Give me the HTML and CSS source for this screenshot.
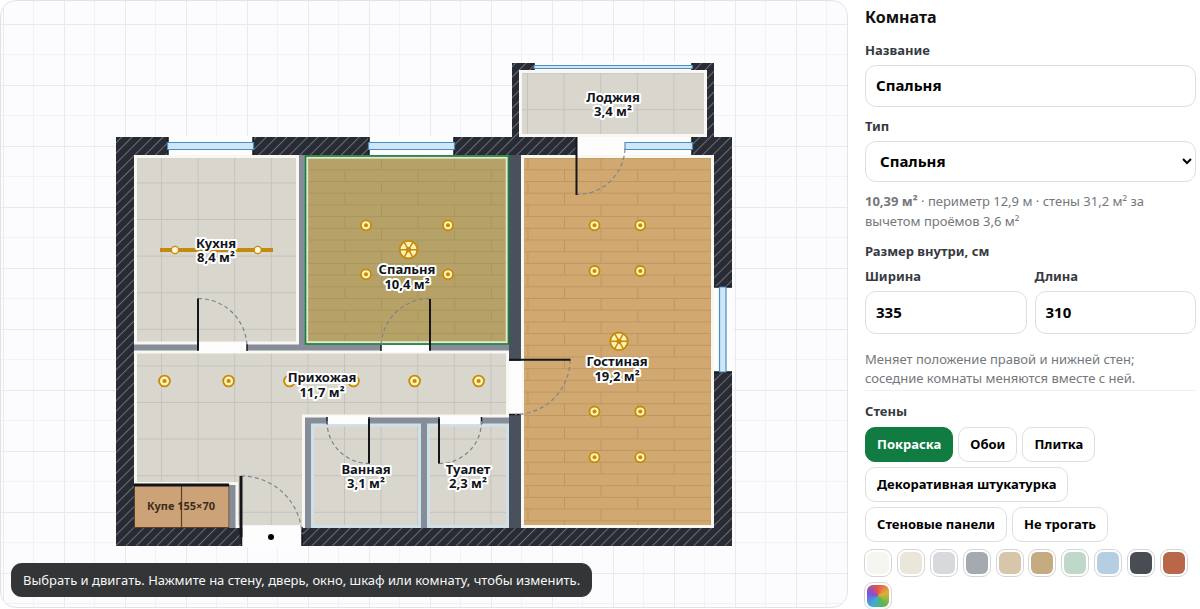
FILE: index.html
```html
<!DOCTYPE html>
<html lang="ru">
<head>
<meta charset="utf-8">
<meta name="viewport" content="width=device-width, initial-scale=1">
<title>План квартиры</title>
<link rel="stylesheet" href="styles.css">
</head>
<body>
<div class="app">
  <main class="canvas">
    <svg class="plan" viewBox="0 0 846 606" role="img" aria-label="План квартиры">
      <defs>
        <pattern id="grid" x="2" y="23" width="61" height="61" patternUnits="userSpaceOnUse">
          <path class="grid-minor" d="M30.5 0V61M0 30.5H61"/>
          <path class="grid-major" d="M.5 0V61M0 .5H61"/>
        </pattern>
        <pattern id="hatch" width="7.3" height="7.3" patternUnits="userSpaceOnUse" patternTransform="rotate(45)">
          <rect class="hatch-base" width="7.3" height="7.3"/>
          <path class="hatch-line" d="M.5 0V7.3"/>
        </pattern>
        <pattern id="tile" x="161" y="182.4" width="36.6" height="36.6" patternUnits="userSpaceOnUse">
          <rect class="tile-base" width="36.6" height="36.6"/>
          <path class="tile-line" d="M.5 0V36.6M0 .5H36.6"/>
        </pattern>
        <pattern id="wood" x="381" y="181" width="73.2" height="23.4" patternUnits="userSpaceOnUse">
          <rect class="wood-base" width="73.2" height="23.4"/>
          <path class="wood-line" d="M0 .5H73.2M0 12.2H73.2M.5 0V11.7M37.1 11.7V23.4"/>
        </pattern>
        <g id="spot"><circle class="lamp" r="5"/><circle class="lamp-dot" r="2"/></g>
        <g id="spot-lg"><circle class="lamp" r="5.4"/><circle class="lamp-dot" r="2.1"/></g>
        <g id="chandelier"><circle class="lamp" r="8.8"/><path class="lamp-ray" d="M-8.8 0H8.8M-4.4 -7.6L4.4 7.6M4.4 -7.6L-4.4 7.6"/><circle class="lamp-dot" r="2.6"/></g>
      </defs>

      <rect x="-200" y="-200" width="1246" height="1006" fill="url(#grid)"/>

      <g transform="translate(-1 -1)">
        <!-- Несущие стены -->
        <path fill="url(#hatch)" d="M512 63H714V137H732V546H116V137H512Z"/>
        <!-- Перегородки -->
        <path class="wall-thin" d="M134 155H509V528H134Z"/>
        <path class="wall-mid" d="M509 155H522V528H509Z"/>

        <!-- Помещения -->
        <g class="room">
          <path fill="url(#tile)" d="M520.5 71.5H705.500V135.500H520.5Z"/>
          <path fill="url(#tile)" d="M135.500 156.500H297.500V343H135.500Z"/>
          <path fill="url(#wood)" d="M522.5 156.500H712.5V526.500H522.5Z"/>
          <path fill="url(#tile)" d="M135.500 352H507.500V416H303.500V526.500H236.500V483.500H135.500Z"/>
        </g>
        <g class="room room-wet">
          <path fill="url(#tile)" d="M312.500 425H419.500V526.500H312.500Z"/>
          <path fill="url(#tile)" d="M428.500 425H507.500V526.500H428.500Z"/>
        </g>
        <rect fill="url(#wood)" x="305" y="155.500" width="204" height="189"/>
        <rect class="selected-tint" x="305" y="155.500" width="204" height="189"/>
        <rect class="selected-inner" x="307.200" y="157.700" width="199.500" height="184.500"/>
        <rect class="selected-outer" x="305.500" y="156" width="203" height="188"/>

        <!-- Проёмы -->
        <g class="opening">
          <path d="M168 136H253V155H168ZM369 136H454V155H369ZM577 137H692V155H577ZM714 287H733V372H714Z"/>
          <path d="M534 62H692V70H534Z"/>
          <path d="M198 342.500H247V353H198ZM381 345H430V352H381ZM509 360H522V414H509ZM242 526H302V547H242ZM327 416H369V424H327ZM439 416H481.500V424H439Z"/>
        </g>
        <path class="jamb" d="M168 137V155M253 137V155M369 137V155M454 137V155M692 137V155M534 63V70M692 63V70M714 287H732M714 372H732M198 344V351M247 344V351M381 345V351M430 345V351M509 360H521M509 414.500H521M241.500 528V546M302 527V546M327 417V424M369 417V424M439 417V424M481.500 417V424"/>
        <path class="glass" d="M167.500 142.500H253.500V149.500H167.500ZM368.500 142.500H454.500V149.500H368.500ZM625 142.500H692.500V149.500H625ZM719.500 287H726V372H719.500ZM534 65.500H692.500V68.500H534Z"/>

        <!-- Двери -->
        <path class="swing" d="M198 298.500A49 49 0 0 1 247 347M430 298.500A49 49 0 0 0 381 347M625 149A48 48 0 0 1 577 194.500M570 360A55 55 0 0 1 515 414.500M241 476A61 61 0 0 1 302 534M327 421A42 42 0 0 0 369 463.500M481.500 421A42 42 0 0 1 439 463.500"/>
        <path class="leaf" d="M198 298.500V350M430 299V350M576.500 137V195M509 359.700H570.500M369 419V463.500M439 419V463.500"/>
        <path class="leaf leaf-main" d="M241 476V537"/>
        <circle cx="271" cy="537" r="3"/>

        <!-- Шкаф -->
        <rect class="closet" x="134.500" y="485" width="94.500" height="42.500"/>
        <path class="closet-split" d="M181.500 485V528"/>
        <path class="closet-front" d="M134 485H229"/>
        <path class="wall-thin" d="M229.500 485H235.500V528H229.500Z"/>

        <!-- Светильники -->
        <path class="track" d="M160 250H273"/>
        <circle class="track-lamp" cx="175" cy="250" r="3.600"/>
        <circle class="track-lamp" cx="257.700" cy="250" r="3.600"/>
        <use href="#spot" x="366" y="225.300"/><use href="#spot" x="448" y="225.300"/>
        <use href="#spot" x="366" y="274.300"/><use href="#spot" x="448" y="274.300"/>
        <use href="#chandelier" x="408.500" y="249.700"/>
        <use href="#spot" x="594.500" y="225.300"/><use href="#spot" x="640.300" y="225.300"/>
        <use href="#spot" x="594.500" y="271"/><use href="#spot" x="640.300" y="271"/>
        <use href="#spot" x="594.500" y="411.500"/><use href="#spot" x="640.300" y="411.500"/>
        <use href="#spot" x="594.500" y="457.300"/><use href="#spot" x="640.300" y="457.300"/>
        <use href="#chandelier" x="619" y="341.300"/>
        <use href="#spot-lg" x="164.500" y="381"/><use href="#spot-lg" x="228.600" y="381"/>
        <use href="#spot-lg" x="289.500" y="381"/><use href="#spot-lg" x="353.500" y="381"/>
        <use href="#spot-lg" x="414.600" y="381"/><use href="#spot-lg" x="478.600" y="381"/>

        <!-- Подписи -->
        <g class="label">
          <text x="216" y="248">Кухня</text><text x="216" y="262">8,4 м²</text>
          <text x="407" y="274">Спальня</text><text x="407" y="289">10,4 м²</text>
          <text x="613" y="102">Лоджия</text><text x="613" y="116">3,4 м²</text>
          <text x="617" y="366">Гостиная</text><text x="617" y="381">19,2 м²</text>
          <text x="322" y="382">Прихожая</text><text x="322" y="397">11,7 м²</text>
          <text x="366" y="474">Ванная</text><text x="366" y="488">3,1 м²</text>
          <text x="468" y="474">Туалет</text><text x="468" y="488">2,3 м²</text>
        </g>
        <text class="closet-label" x="181" y="510">Купе 155×70</text>
      </g>
    </svg>
    <div class="hint" role="status">Выбрать и двигать. Нажмите на стену, дверь, окно, шкаф или комнату, чтобы изменить.</div>
  </main>

  <aside class="panel">
    <h2 class="title">Комната</h2>
    <label class="caption" for="name">Название</label>
    <input class="field" id="name" type="text" value="Спальня">
    <label class="caption" for="type">Тип</label>
    <select class="field" id="type"><option>Спальня</option></select>
    <p class="summary"><strong>10,39 м²</strong> · периметр 12,9 м · стены 31,2 м² за вычетом проёмов 3,6 м²</p>
    <h3 class="caption">Размер внутри, см</h3>
    <div class="sizes">
      <div class="size"><label class="caption" for="w">Ширина</label><input class="field" id="w" type="text" inputmode="numeric" value="335"></div>
      <div class="size"><label class="caption" for="l">Длина</label><input class="field" id="l" type="text" inputmode="numeric" value="310"></div>
    </div>
    <p class="note">Меняет положение правой и нижней стен; соседние комнаты меняются вместе с ней.</p>
    <section class="walls">
      <h3 class="caption">Стены</h3>
      <div class="chips">
        <button class="chip chip-on" type="button">Покраска</button>
        <button class="chip" type="button">Обои</button>
        <button class="chip" type="button">Плитка</button>
        <button class="chip" type="button">Декоративная штукатурка</button>
        <button class="chip" type="button">Стеновые панели</button>
        <button class="chip" type="button">Не трогать</button>
      </div>
      <div class="swatches">
        <button class="swatch c-white" type="button" aria-label="Белый"></button>
        <button class="swatch c-cream" type="button" aria-label="Кремовый"></button>
        <button class="swatch c-light" type="button" aria-label="Светло-серый"></button>
        <button class="swatch c-gray" type="button" aria-label="Серый"></button>
        <button class="swatch c-beige" type="button" aria-label="Бежевый"></button>
        <button class="swatch c-sand" type="button" aria-label="Песочный"></button>
        <button class="swatch c-mint" type="button" aria-label="Мятный"></button>
        <button class="swatch c-blue" type="button" aria-label="Голубой"></button>
        <button class="swatch c-dark" type="button" aria-label="Графит"></button>
        <button class="swatch c-brick" type="button" aria-label="Терракота"></button>
        <button class="swatch c-any" type="button" aria-label="Свой цвет"></button>
      </div>
    </section>
  </aside>
</div>
</body>
</html>
```
FILE: styles.css
```css
* { box-sizing: border-box; }

body {
  margin: 0;
  background: #fff;
  color: #111;
  font-family: "Noto Sans", sans-serif;
  font-size: 13px;
}

.app {
  display: grid;
  grid-template-columns: minmax(0, 1fr) 331px;
  grid-template-rows: minmax(0, 1fr);
  gap: 17px;
  height: 100vh;
  padding-right: 4px;
  overflow: hidden;
}

/* Холст */
.canvas {
  position: relative;
  margin-bottom: 1px;
  border: 1px solid #e1e3e8;
  border-radius: 16px;
  background: #fcfcfe;
  overflow: hidden;
}
.plan { display: block; width: 100%; height: 100%; }

.hint {
  position: absolute;
  left: 10px;
  bottom: 10px;
  padding: 7px 12px;
  border-radius: 11px;
  background: #333537;
  color: #f6f6f6;
  font-size: 13px;
  line-height: 20px;
}

.grid-minor, .grid-major { fill: none; stroke: #f1f2f5; stroke-width: 1; }
.grid-major { stroke: #e8eaee; }
.hatch-base { fill: #282b33; }
.hatch-line { stroke: #6a6e76; stroke-width: 1; }
.tile-base { fill: #d9d6ce; }
.tile-line { fill: none; stroke: #c6c3bd; stroke-width: 1; }
.wood-base { fill: #d0a870; }
.wood-line { fill: none; stroke: #bd9763; stroke-width: 1; }
.wall-thin { fill: #868c98; }
.wall-mid { fill: #49515d; }
.room { stroke: #f8f7f2; stroke-width: 3; }
.room-wet { stroke: #cfe1e8; }
.selected-tint { fill: #7e9650; fill-opacity: .32; }
.selected-inner { fill: none; stroke: #dcebd2; stroke-width: 2; }
.selected-outer { fill: none; stroke: #16803f; stroke-width: 1.5; }
.opening { fill: #fdfdfe; }
.jamb { fill: none; stroke: #15181d; stroke-width: 1.5; }
.glass { fill: #cfe6f6; stroke: #4a8fc4; stroke-width: 1.2; }
.swing { fill: none; stroke: #7d828c; stroke-width: 1.2; stroke-dasharray: 4 3; }
.leaf { fill: none; stroke: #14161b; stroke-width: 2; }
.leaf-main { stroke-width: 3; }
.closet { fill: #cca378; stroke: #5e4124; stroke-width: 1; }
.closet-split { stroke: #5e4124; stroke-width: 1.2; }
.closet-front { stroke: #111318; stroke-width: 3; }
.lamp { fill: #fff2b5; stroke: #c58a0c; stroke-width: 1.8; }
.lamp-dot { fill: #c58a0c; }
.lamp-ray { fill: none; stroke: #c58a0c; stroke-width: 1.5; }
.track { stroke: #c58a0c; stroke-width: 4; }
.track-lamp { fill: #fffbe0; stroke: #c58a0c; stroke-width: 1.3; }
.label {
  fill: #10141b;
  stroke: #fff;
  stroke-width: 4;
  stroke-linejoin: round;
  paint-order: stroke;
  font-size: 13px;
  font-weight: 700;
  text-anchor: middle;
}
.closet-label { fill: #3e2c1c; font-size: 11px; font-weight: 700; text-anchor: middle; }

/* Панель свойств */
.panel { padding-top: 6px; min-width: 0; }
.title { margin: 0 0 12px; font-size: 16px; line-height: 22px; }
.caption {
  display: block;
  margin: 0 0 5px;
  color: #363a41;
  font-size: 13px;
  font-weight: 700;
  line-height: 20px;
}
.field {
  display: block;
  width: 100%;
  height: 42px;
  margin: 0 0 9px;
  padding: 0 10px 2px;
  border: 1px solid #dcdfe2;
  border-radius: 11px;
  background: #fff;
  color: #000;
  font: 700 15px/20px "Noto Sans", sans-serif;
}
select.field { height: 41px; }
.summary { margin: 0 0 10px; color: #74777c; line-height: 20px; }
.sizes { display: grid; grid-template-columns: 1fr 1fr; gap: 8px; }
.size .field { height: 43px; margin-bottom: 16px; }
.note { margin: 0; padding-bottom: 2px; color: #74777c; line-height: 19px; }
.walls { padding-top: 10px; border-top: 1px solid #eff0f2; }
.walls .caption { margin-bottom: 6px; }
.chips { display: flex; flex-wrap: wrap; gap: 5px; }
.chip {
  height: 35px;
  padding: 0 11px 2px;
  border: 1px solid #dcdfe2;
  border-radius: 10px;
  background: #fff;
  color: #000;
  font: 700 13px/20px "Noto Sans", sans-serif;
}
.chip-on { border-color: #107c41; background: #107c41; color: #fff; }
.swatches {
  display: grid;
  grid-template-columns: repeat(10, 28px);
  justify-content: space-between;
  row-gap: 5px;
  margin: 7px 8px 0 -1px;
}
.swatch {
  width: 28px;
  height: 28px;
  padding: 2px;
  border: 1px solid #d2d5da;
  border-radius: 9px;
  background: #fff;
}
.swatch::before { content: ""; display: block; width: 22px; height: 22px; border-radius: 6px; background: var(--paint); }
.c-white { --paint: #f6f6f1; }
.c-cream { --paint: #eae7da; }
.c-light { --paint: #d8d9dc; }
.c-gray { --paint: #a5a9b0; }
.c-beige { --paint: #d8c6aa; }
.c-sand { --paint: #c5ab80; }
.c-mint { --paint: #bfd8c9; }
.c-blue { --paint: #b5cfe2; }
.c-dark { --paint: #484c53; }
.c-brick { --paint: #b86848; }
.c-any { --paint: conic-gradient(#e65545, #e0b03c, #5cb84c, #3cabdc, #8050d8, #e65545); }
```
